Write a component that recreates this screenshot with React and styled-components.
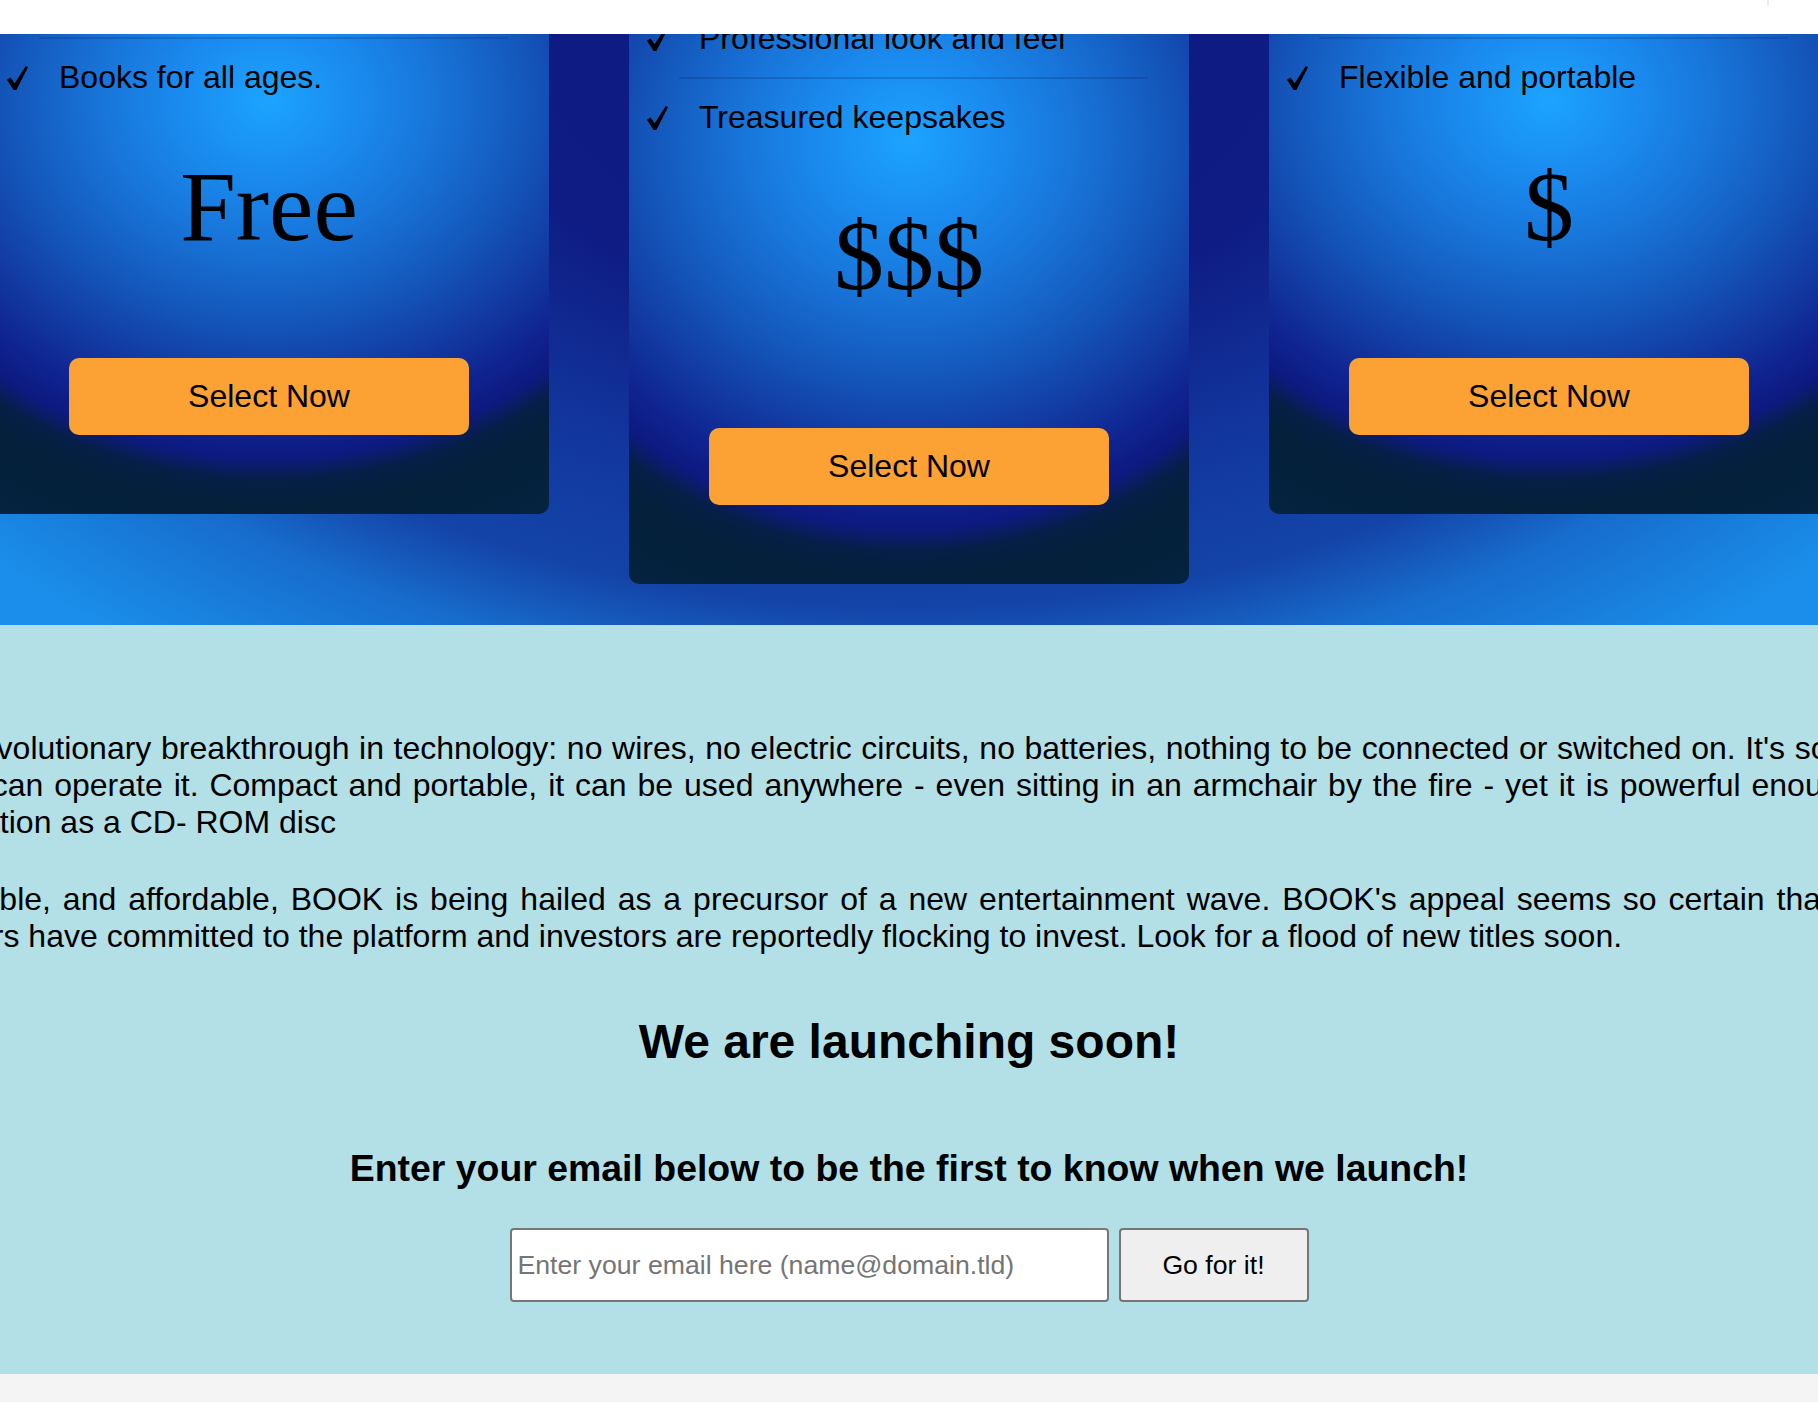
import React from 'react';
import styled, { createGlobalStyle, css } from 'styled-components';

const GlobalStyle = createGlobalStyle`
  html, body {
    margin: 0;
    padding: 0;
  }
  body {
    background: #f4f4f4;
    color: #000;
    font-family: "Liberation Sans", Arial, Helvetica, sans-serif;
    overflow-x: hidden;
  }
`;

const Page = styled.div`
  width: 100%;
  overflow: hidden;
`;

const TopBar = styled.header`
  height: 34px;
  background: #fff;
  display: flex;
  justify-content: flex-end;
`;

const TopBarTick = styled.span`
  width: 2px;
  height: 6px;
  margin-right: 49px;
  background: #ececec;
`;

const Pricing = styled.section`
  overflow: hidden;
  padding-bottom: 41px;
  background: radial-gradient(
    ellipse 1100px 700px at 50% 0,
    #0e1a80 0%,
    #0e1c84 40%,
    #1238a0 66%,
    #1444a8 82%,
    #176ccc 93%,
    #1a8eea 112%
  );
`;

const CardRow = styled.div`
  display: flex;
  justify-content: center;
  align-items: flex-start;
  gap: 80px;
  margin-top: -60px;
`;

const glow = (y, ry) => css`
  background: radial-gradient(
    ellipse 420px ${ry}px at 50% ${y}px,
    #1ca4ff 0%,
    #1a8aee 22%,
    #1872d6 42%,
    #1456ba 62%,
    #1238a0 80%,
    #0f2390 92%,
    #0d1a80 100%,
    #061f48 106%,
    #04203a 113%,
    #062a48 170%
  );
`;

const Price = styled.div`
  margin-top: 41px;
  font-family: "Liberation Serif", "Times New Roman", serif;
  font-size: 100px;
  line-height: 1;
`;

const SelectButton = styled.button`
  width: 400px;
  height: 77px;
  margin-top: 101px;
  border: none;
  border-radius: 10px;
  background: #fca235;
  color: #000;
  font-family: "Liberation Sans", Arial, Helvetica, sans-serif;
  font-size: 32px;
  cursor: pointer;
`;

const Card = styled.article`
  flex: 0 0 560px;
  box-sizing: border-box;
  display: flex;
  flex-direction: column;
  align-items: center;
  padding: 63px 0 79px;
  border-radius: 10px;
  ${glow(126, 358)}

  ${(p) =>
    p.$featured &&
    css`
      padding-top: 24px;
      ${glow(166, 388)}

      ${Price} {
        margin-top: 50px;
      }
      ${SelectButton} {
        margin-top: 122px;
      }
    `}
`;

const Features = styled.ul`
  align-self: stretch;
  list-style: none;
  margin: 0 41px 0 50px;
  padding: 0;
`;

const Feature = styled.li`
  display: flex;
  align-items: center;
  padding: 20px 0;
  border-top: 2px solid rgba(10, 40, 120, 0.25);
  font-size: 32px;
  line-height: normal;
`;

const Check = styled.span`
  flex: 0 0 52px;
  margin-left: -32px;
  display: flex;
  align-items: center;
`;

const CheckMark = () => (
  <svg width="21" height="24" viewBox="0 0 21 24" aria-hidden="true">
    <path d="M0 13.8 L3.5 11.5 L7.7 17.2 L18.8 0 L21 1.3 L9.4 24 L6.6 24 Z" fill="#000" />
  </svg>
);

const About = styled.section`
  background: #b3dfe6;
  padding: 105px 0 72px;
  display: flex;
  flex-direction: column;
  align-items: center;
`;

const Copy = styled.div`
  align-self: stretch;
  margin: 0 -194px;
  font-size: 32px;
  line-height: normal;
`;

const Para = styled.p`
  margin: 0;
  & + & {
    margin-top: 40px;
  }
`;

const Line = styled.span`
  display: block;
  text-align: justify;
  text-align-last: ${(p) => (p.$last ? 'left' : 'justify')};
`;

const LaunchTitle = styled.h2`
  margin: 59px 0 0;
  font-size: 48px;
  font-weight: 700;
  line-height: normal;
`;

const LaunchSub = styled.h3`
  margin: 78px 0 0;
  font-size: 37.44px;
  font-weight: 700;
  line-height: normal;
`;

const SignupForm = styled.form`
  display: flex;
  gap: 10px;
  margin-top: 38px;
`;

const EmailInput = styled.input`
  box-sizing: border-box;
  width: 599px;
  height: 74px;
  padding: 0 6px;
  border: 2px solid #767676;
  border-radius: 4px;
  background: #fff;
  font-family: "Liberation Sans", Arial, Helvetica, sans-serif;
  font-size: 26.67px;
  color: #000;

  &::placeholder {
    color: #757575;
  }
`;

const GoButton = styled.button`
  box-sizing: border-box;
  width: 190px;
  height: 74px;
  border: 2px solid #767676;
  border-radius: 4px;
  background: #efefef;
  color: #000;
  font-family: "Liberation Sans", Arial, Helvetica, sans-serif;
  font-size: 26.67px;
`;

const Footer = styled.footer`
  height: 29px;
  background: #f4f4f4;
`;

const plans = [
  { id: 'basic', features: ['Books for all ages.'], price: 'Free' },
  {
    id: 'collector',
    features: ['Professional look and feel', 'Treasured keepsakes'],
    price: '$$$',
    featured: true,
  },
  { id: 'pocket', features: ['Flexible and portable'], price: '$' },
];

const App = () => {
  return (
    <Page>
      <GlobalStyle />
      <TopBar>
        <TopBarTick />
      </TopBar>

      <Pricing>
        <CardRow>
          {plans.map((plan) => (
            <Card key={plan.id} $featured={plan.featured}>
              <Features>
                {plan.features.map((f) => (
                  <Feature key={f}>
                    <Check>
                      <CheckMark />
                    </Check>
                    {f}
                  </Feature>
                ))}
              </Features>
              <Price>{plan.price}</Price>
              <SelectButton type="button">Select Now</SelectButton>
            </Card>
          ))}
        </CardRow>
      </Pricing>

      <About>
        <Copy>
          <Para>
            <Line>
              BOOK is a revolutionary breakthrough in technology: no wires, no electric circuits, no
              batteries, nothing to be connected or switched on. It's so easy to use,
            </Line>
            <Line>
              even a child can operate it. Compact and portable, it can be used anywhere - even
              sitting in an armchair by the fire - yet it is powerful enough to hold as
            </Line>
            <Line $last>much information as a CD- ROM disc</Line>
          </Para>
          <Para>
            <Line>
              Durable, reliable, and affordable, BOOK is being hailed as a precursor of a new
              entertainment wave. BOOK's appeal seems so certain that many major
            </Line>
            <Line $last>
              new publishers have committed to the platform and investors are reportedly flocking
              to invest. Look for a flood of new titles soon.
            </Line>
          </Para>
        </Copy>

        <LaunchTitle>We are launching soon!</LaunchTitle>
        <LaunchSub>Enter your email below to be the first to know when we launch!</LaunchSub>

        <SignupForm onSubmit={(e) => e.preventDefault()}>
          <EmailInput type="email" placeholder="Enter your email here (name@domain.tld)" />
          <GoButton type="submit">Go for it!</GoButton>
        </SignupForm>
      </About>

      <Footer />
    </Page>
  );
};

export default App;
